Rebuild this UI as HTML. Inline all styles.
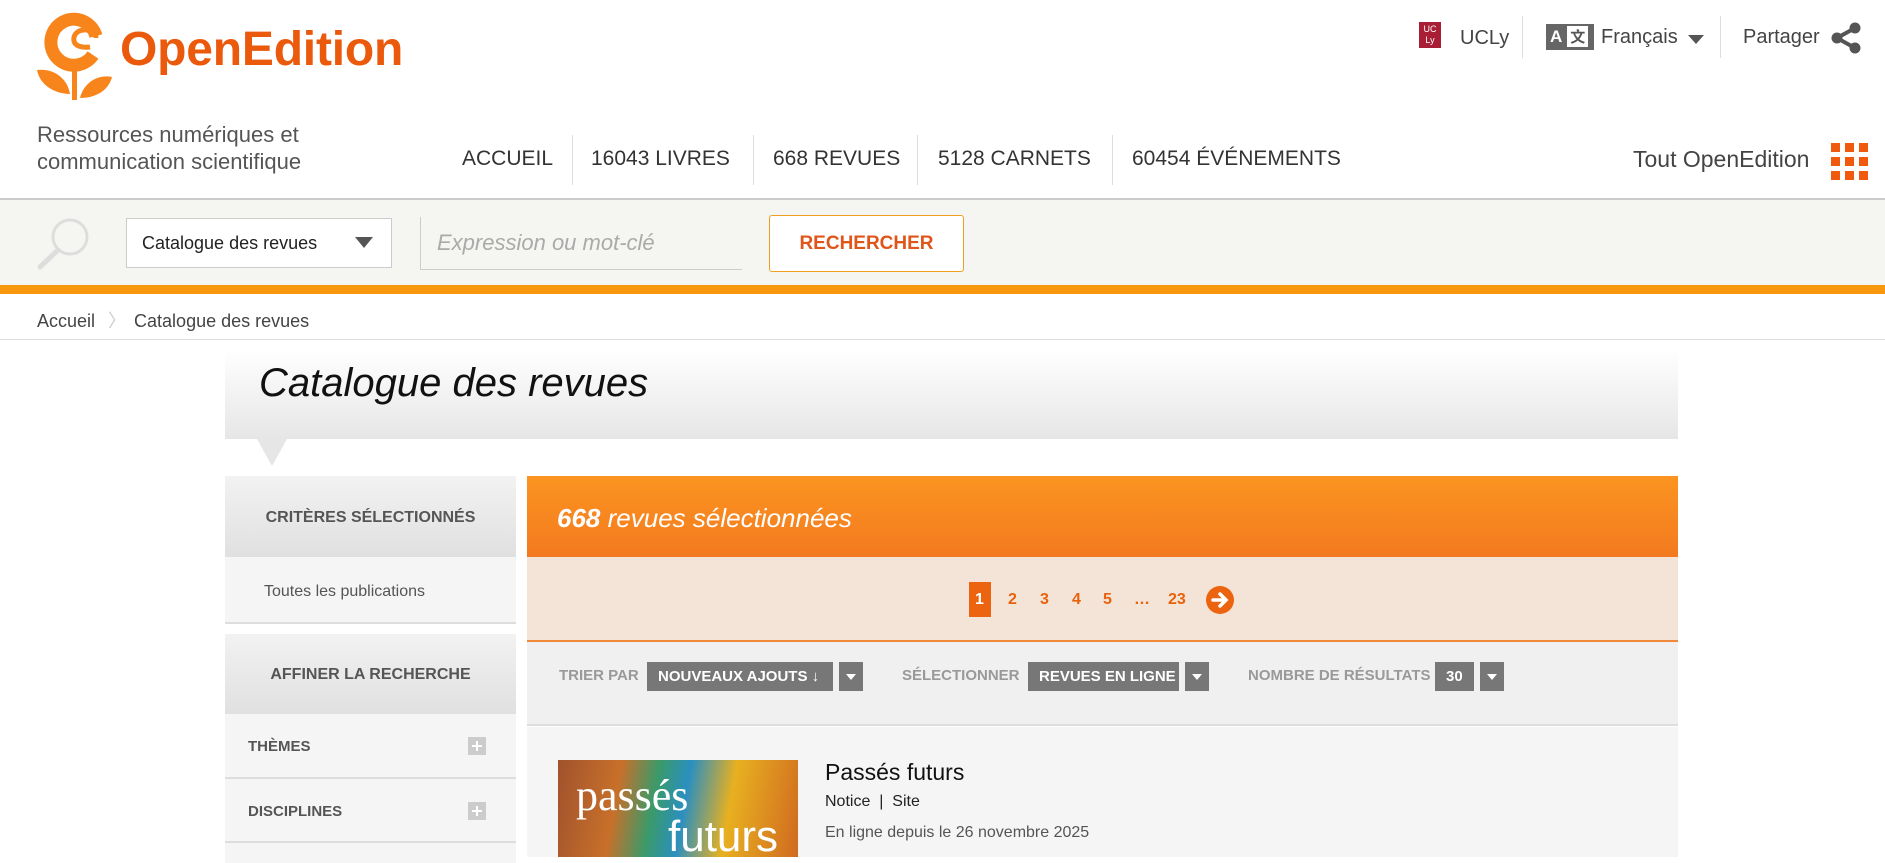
<!DOCTYPE html>
<html><head><meta charset="utf-8"><style>
*{margin:0;padding:0;box-sizing:border-box}
body{width:1885px;height:857px;overflow:hidden;background:#fff;font-family:"Liberation Sans",Arial,sans-serif;color:#444;position:relative}
.a{position:absolute;white-space:nowrap}
.nav{font-size:21px;color:#333;top:147px}
.sep{position:absolute;width:1px;background:#ddd}
.lbl{font-size:15px;color:#999;font-weight:bold;top:667px}
.sel{position:absolute;background:#777;color:#fff;font-size:15px;font-weight:bold;height:29px;line-height:29px;top:662px;padding-left:11px}
.arr{position:absolute;background:#777;height:29px;top:662px;width:24px}
.arr:after{content:"";position:absolute;left:7px;top:12px;border-left:5px solid transparent;border-right:5px solid transparent;border-top:6px solid #fff}
.side{position:absolute;left:225px;width:291px;background:#f5f5f5;border-bottom:2px solid #ddd;font-size:15px;font-weight:bold;color:#555}
.plus{position:absolute;left:243px;width:18px;height:18px;background:#ccc}
.plus:before{content:"";position:absolute;left:4px;top:8px;width:10px;height:2px;background:#fff}
.plus:after{content:"";position:absolute;left:8px;top:4px;width:2px;height:10px;background:#fff}
.pg{position:absolute;top:591px;font-size:16px;font-weight:bold;color:#e8620e}
</style></head><body>
<!-- logo -->
<svg class="a" style="left:34px;top:12px" width="82" height="90" viewBox="34 12 82 90">
<path d="M93 55A23 23 0 1 1 96 36" fill="none" stroke="#f7851b" stroke-width="13"/>
<path d="M96 38C96 33 90 29 83 30 76 31 73 36 74 41 75 46 82 48 90 47" fill="none" stroke="#f7851b" stroke-width="5"/>
<rect x="72" y="62" width="5" height="38" fill="#f7851b"/>
<path d="M37 70c14-2 30 6 33 24-14 0-30-8-33-24z" fill="#f7851b"/>
<path d="M112 77c-12-3-28 4-32 21 14 0 28-6 32-21z" fill="#f7851b"/>
</svg>
<div class="a" style="left:120px;top:22px;font-size:48px;font-weight:bold;color:#eb5a0c;letter-spacing:-0.2px">OpenEdition</div>
<!-- top right -->
<div class="a" style="left:1419px;top:22px;width:22px;height:26px;background:#a81e35;color:#fff;font-size:9px;line-height:11px;text-align:center;padding-top:2px">UC<br>Ly</div>
<div class="a" style="left:1460px;top:27px;font-size:20px;color:#444">UCLy</div>
<div class="sep" style="left:1522px;top:16px;height:42px"></div>
<div class="a" style="left:1546px;top:24px;width:48px;height:26px;background:#666;color:#fff;font-size:17px;font-weight:bold;line-height:26px;padding-left:4px">A<span style="background:#fff;color:#555;margin-left:5px;padding:0 3px;font-family:'Noto Sans CJK SC',sans-serif;font-size:15px">文</span></div>
<div class="a" style="left:1601px;top:26px;font-size:20px;color:#444">Français</div>
<div class="a" style="left:1688px;top:35px;border-left:8px solid transparent;border-right:8px solid transparent;border-top:9px solid #555"></div>
<div class="sep" style="left:1720px;top:16px;height:42px"></div>
<div class="a" style="left:1743px;top:26px;font-size:20px;color:#444">Partager</div>
<svg class="a" style="left:1830px;top:22px" width="32" height="32" viewBox="0 0 32 32"><g fill="#555"><circle cx="25" cy="6" r="5.5"/><circle cx="25" cy="26" r="5.5"/><circle cx="7" cy="16" r="5.5"/></g><path d="M25 6L7 16L25 26" stroke="#555" stroke-width="4" fill="none"/></svg>
<!-- tagline + nav -->
<div class="a" style="left:37px;top:121px;font-size:22px;line-height:27px;color:#555">Ressources numériques et<br>communication scientifique</div>
<div class="a nav" style="left:462px">ACCUEIL</div>
<div class="sep" style="left:572px;top:135px;height:50px"></div>
<div class="a nav" style="left:591px">16043 LIVRES</div>
<div class="sep" style="left:753px;top:135px;height:50px"></div>
<div class="a nav" style="left:773px">668 REVUES</div>
<div class="sep" style="left:917px;top:135px;height:50px"></div>
<div class="a nav" style="left:938px">5128 CARNETS</div>
<div class="sep" style="left:1112px;top:135px;height:50px"></div>
<div class="a nav" style="left:1132px">60454 ÉVÉNEMENTS</div>
<div class="a" style="left:1633px;top:146px;font-size:23px;color:#444">Tout OpenEdition</div>
<svg class="a" style="left:1831px;top:143px" width="37" height="37"><g fill="#f05a0f"><rect x="0" y="0" width="9" height="9"/><rect x="14" y="0" width="9" height="9"/><rect x="28" y="0" width="9" height="9"/><rect x="0" y="14" width="9" height="9"/><rect x="14" y="14" width="9" height="9"/><rect x="28" y="14" width="9" height="9"/><rect x="0" y="28" width="9" height="9"/><rect x="14" y="28" width="9" height="9"/><rect x="28" y="28" width="9" height="9"/></g></svg>
<!-- search bar -->
<div class="a" style="left:0;top:198px;width:1885px;height:88px;background:#f5f5f2;border-top:2px solid #ccc"></div>
<div class="a" style="left:0;top:285px;width:1885px;height:9px;background:#f7980f"></div>
<svg class="a" style="left:36px;top:216px" width="56" height="54"><circle cx="34" cy="21" r="17" fill="none" stroke="#ddd" stroke-width="3"/><path d="M22 34L4 51" stroke="#ddd" stroke-width="5" stroke-linecap="round"/></svg>
<div class="a" style="left:126px;top:218px;width:266px;height:50px;background:#fff;border:1px solid #ccc"></div>
<div class="a" style="left:142px;top:233px;font-size:18px;color:#222">Catalogue des revues</div>
<div class="a" style="left:355px;top:237px;border-left:9px solid transparent;border-right:9px solid transparent;border-top:11px solid #555"></div>
<div class="a" style="left:420px;top:217px;width:322px;height:53px;border-left:1px solid #ccc;border-bottom:1px solid #ccc"></div>
<div class="a" style="left:437px;top:230px;font-size:22px;font-style:italic;color:#aaa">Expression ou mot-clé</div>
<div class="a" style="left:769px;top:215px;width:195px;height:57px;background:#fff;border:1px solid #f0a020;border-radius:3px;color:#e0561a;font-size:19px;font-weight:bold;text-align:center;line-height:55px">RECHERCHER</div>
<!-- breadcrumb -->
<div class="a" style="left:37px;top:307px;font-size:18px;color:#444">Accueil <span style="color:#ccc;margin:0 8px">〉</span>Catalogue des revues</div>
<div class="a" style="left:0;top:339px;width:1885px;height:1px;background:#ddd"></div>
<!-- title -->
<div class="a" style="left:225px;top:349px;width:1453px;height:90px;background:linear-gradient(#fff,#e6e6e6)"></div>
<div class="a" style="left:259px;top:361px;font-size:40px;font-style:italic;color:#111">Catalogue des revues</div>
<div class="a" style="left:257px;top:439px;border-left:15px solid transparent;border-right:15px solid transparent;border-top:27px solid #e6e6e6"></div>
<!-- sidebar -->
<div class="side" style="top:476px;height:81px;background:linear-gradient(#f2f2f2,#e0e0e0);border:none;text-align:center;line-height:83px;font-size:16px">CRITÈRES SÉLECTIONNÉS</div>
<div class="side" style="top:557px;height:67px;font-weight:normal;font-size:16px;padding:26px 0 0 39px">Toutes les publications</div>
<div class="side" style="top:634px;height:80px;background:linear-gradient(#f2f2f2,#e0e0e0);border:none;text-align:center;line-height:82px;font-size:16px">AFFINER LA RECHERCHE</div>
<div class="side" style="top:714px;height:65px;padding:24px 0 0 23px">THÈMES<div class="plus" style="top:23px"></div></div>
<div class="side" style="top:779px;height:64px;padding:24px 0 0 23px">DISCIPLINES<div class="plus" style="top:23px"></div></div>
<div class="side" style="top:843px;height:20px;border:none"></div>
<!-- main -->
<div class="a" style="left:527px;top:476px;width:1151px;height:81px;background:linear-gradient(#fb9420,#f37a1f);color:#fff;font-size:26px;font-style:italic;padding:27px 0 0 30px"><b>668</b> revues sélectionnées</div>
<div class="a" style="left:527px;top:557px;width:1151px;height:85px;background:#f3e4d7;border-bottom:2px solid #f08a3a"></div>
<div class="a" style="left:969px;top:582px;width:22px;height:35px;background:#ec6410"></div>
<div class="pg" style="left:975px;color:#fff">1</div>
<div class="pg" style="left:1008px">2</div>
<div class="pg" style="left:1040px">3</div>
<div class="pg" style="left:1072px">4</div>
<div class="pg" style="left:1103px">5</div>
<div class="pg" style="left:1134px">…</div>
<div class="pg" style="left:1168px">23</div>
<svg class="a" style="left:1205px;top:585px" width="30" height="30"><circle cx="15" cy="15" r="14" fill="#ec6410"/><path d="M8 15h12M15 9l6 6-6 6" stroke="#fff" stroke-width="3.5" fill="none" stroke-linecap="round"/></svg>
<div class="a" style="left:527px;top:642px;width:1151px;height:84px;background:#f0f0f0;border-bottom:2px solid #ddd"></div>
<div class="a lbl" style="left:559px">TRIER PAR</div>
<div class="sel" style="left:647px;width:186px">NOUVEAUX AJOUTS ↓</div><div class="arr" style="left:839px"></div>
<div class="a lbl" style="left:902px">SÉLECTIONNER</div>
<div class="sel" style="left:1028px;width:151px">REVUES EN LIGNE</div><div class="arr" style="left:1185px"></div>
<div class="a lbl" style="left:1248px">NOMBRE DE RÉSULTATS</div>
<div class="sel" style="left:1435px;width:39px">30</div><div class="arr" style="left:1480px"></div>
<div class="a" style="left:527px;top:727px;width:1151px;height:130px;background:#f6f5f5"></div>
<div class="a" style="left:558px;top:760px;width:240px;height:97px;background:linear-gradient(100deg,#a0522d 0%,#c8702a 25%,#3a9a6a 40%,#2a8fc0 52%,#e8b020 70%,#d06a20 100%);overflow:hidden">
<div style="position:absolute;left:18px;top:10px;font-family:'Liberation Serif',serif;font-size:44px;color:#fff">passés</div>
<div style="position:absolute;left:110px;top:52px;font-family:'Liberation Sans',sans-serif;font-size:44px;color:#fff">futurs</div></div>
<div class="a" style="left:825px;top:759px;font-size:23px;color:#111">Passés futurs</div>
<div class="a" style="left:825px;top:793px;font-size:16px;color:#222">Notice &nbsp;|&nbsp; Site</div>
<div class="a" style="left:825px;top:824px;font-size:16px;color:#555">En ligne depuis le 26 novembre 2025</div>
</body></html>
